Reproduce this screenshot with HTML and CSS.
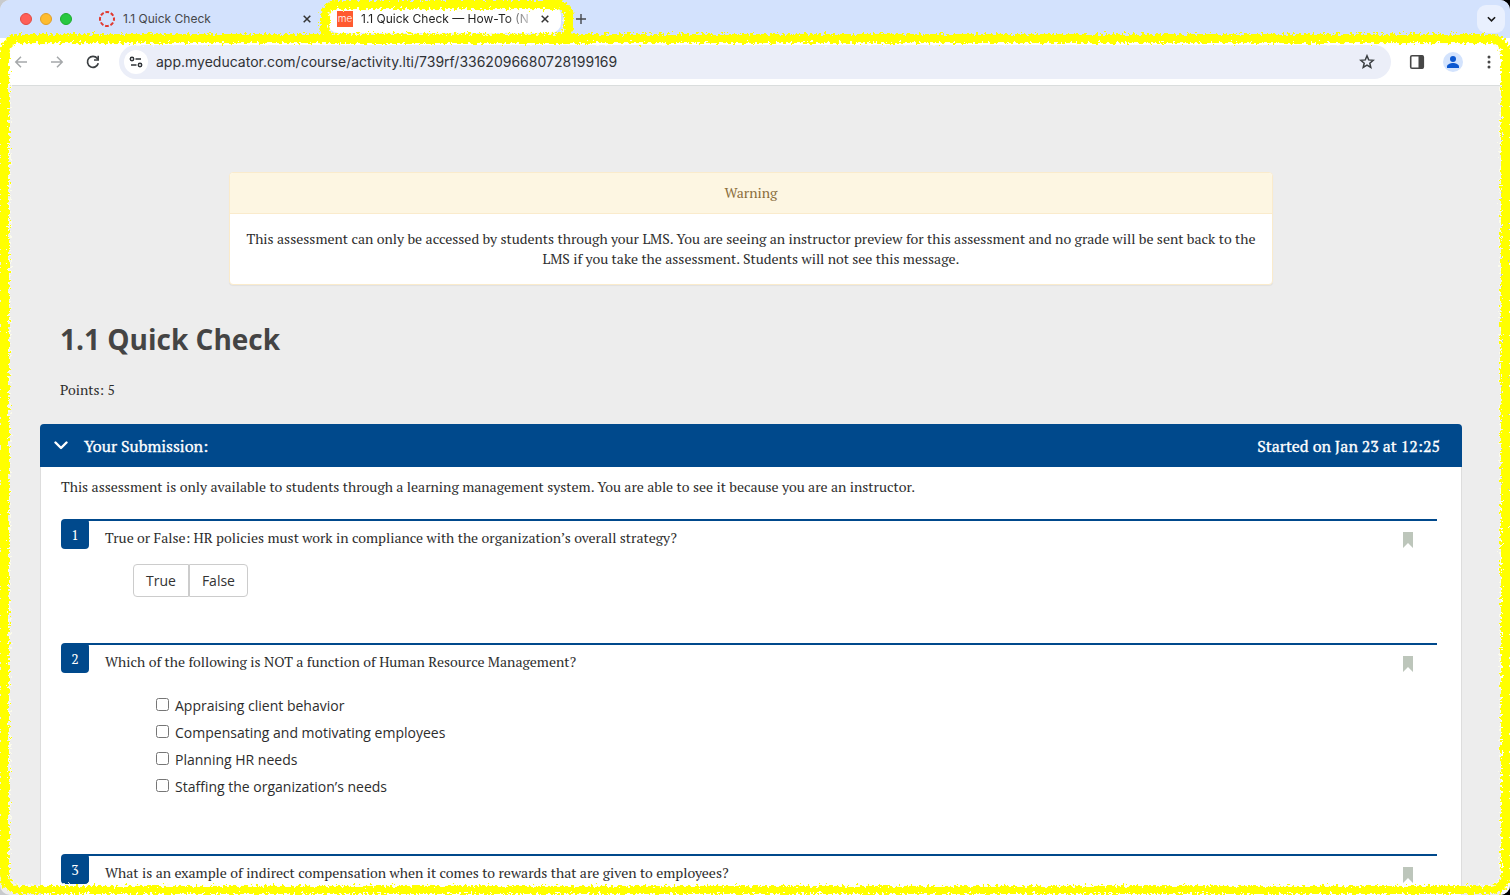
FILE: index.html
```html
<!DOCTYPE html>
<html lang="en">
<head>
    <meta charset="UTF-8">
    <meta name="viewport" content="width=device-width, initial-scale=1.0">
    <title>1.1 Quick Check — How-To</title>
    <link rel="stylesheet" href="styles.css">
</head>
<body>
    <div class="browser">
        <div class="tab-strip">
            <div class="lights">
                <span class="light red"></span>
                <span class="light amber"></span>
                <span class="light green"></span>
            </div>
            <div class="tab">
                <svg class="favicon" viewBox="0 0 16 16" width="16" height="16">
                    <circle cx="8" cy="8" r="7" fill="none" stroke="#e13a30" stroke-width="2" stroke-dasharray="3.7 1.8" stroke-dashoffset="1.85"/>
                </svg>
                <span class="tab-title">1.1 Quick Check</span>
                <button class="tab-close" aria-label="Close tab">
                    <svg viewBox="0 0 8 8" width="8" height="8"><path d="M.7.7l6.6 6.6M7.3.7L.7 7.3"/></svg>
                </button>
            </div>
            <div class="tab current">
                <span class="favicon me">me</span>
                <span class="tab-title fade">1.1 Quick Check — How-To (N</span>
                <button class="tab-close" aria-label="Close tab">
                    <svg viewBox="0 0 8 8" width="8" height="8"><path d="M.7.7l6.6 6.6M7.3.7L.7 7.3"/></svg>
                </button>
            </div>
            <button class="new-tab" aria-label="New tab">
                <svg viewBox="0 0 10 10" width="10" height="10"><path d="M5 0v10M0 5h10" stroke="#45484c" stroke-width="1.4"/></svg>
            </button>
            <button class="tab-search" aria-label="Search tabs">
                <svg viewBox="0 0 10 6" width="9" height="6"><path d="M1 1l4 4 4-4" fill="none" stroke="#1b1b1b" stroke-width="1.8"/></svg>
            </button>
        </div>

        <div class="toolbar">
            <div class="nav">
                <button aria-label="Back">
                    <svg viewBox="0 0 14 12" width="14" height="12"><path d="M13 6H2M7 .8L1.800 6 7 11.200" fill="none" stroke="#a5a8aa" stroke-width="1.500"/></svg>
                </button>
                <button aria-label="Forward">
                    <svg viewBox="0 0 14 12" width="14" height="12"><path d="M1 6h11M7 .8L12.200 6 7 11.200" fill="none" stroke="#a5a8aa" stroke-width="1.500"/></svg>
                </button>
                <button aria-label="Reload">
                    <svg viewBox="0 0 14 14" width="14" height="14"><path d="M12.300 8.300A5.500 5.500 0 1 1 11.300 3.400L12 4.200" fill="none" stroke="#3c4043" stroke-width="1.700"/><path d="M13 .8v5H8V4.200h3.400V.8z" fill="#3c4043"/></svg>
                </button>
            </div>
            <div class="omnibox">
                <button class="site-info" aria-label="Site information">
                    <svg viewBox="0 0 14 12" width="14" height="12" fill="none" stroke="#2f3337" stroke-width="1.500"><circle cx="3" cy="3" r="1.700"/><path d="M6.500 3H12M2 9h5.500"/><circle cx="11" cy="9" r="1.700"/></svg>
                </button>
                <input class="url" type="text" aria-label="Address" value="app.myeducator.com/course/activity.lti/739rf/3362096680728199169">
                <button class="star" aria-label="Bookmark this tab">
                    <svg viewBox="0 0 16 16" width="16" height="16"><path d="M8 1.800l1.700 4.100 4.500.4-3.400 2.900 1 4.300L8 11.200l-3.800 2.300 1-4.300-3.400-2.900 4.500-.4z" fill="none" stroke="#3c4043" stroke-width="1.500"/></svg>
                </button>
            </div>
            <button class="side-panel" aria-label="Side panel">
                <svg viewBox="0 0 16 16" width="16" height="16"><rect x="1.700" y="1.700" width="12.600" height="12.600" rx="1.300" fill="none" stroke="#474747" stroke-width="1.600"/><path d="M9.500 1.500H14v13H9.500z" fill="#474747"/></svg>
            </button>
            <button class="profile" aria-label="Profile">
                <svg viewBox="0 0 20 20" width="20" height="20"><circle cx="10" cy="10" r="10" fill="#d3e3fd"/><circle cx="10" cy="7" r="3" fill="#0b57d0"/><path d="M4 16v-1.500c0-2 3.500-3.500 6-3.500s6 1.500 6 3.500V16z" fill="#0b57d0"/></svg>
            </button>
            <button class="menu" aria-label="Menu">
                <svg viewBox="0 0 4 14" width="4" height="14" fill="#474747"><circle cx="2" cy="2" r="1.500"/><circle cx="2" cy="7" r="1.500"/><circle cx="2" cy="12" r="1.500"/></svg>
            </button>
        </div>

        <div class="viewport">
            <main class="page">
                <section class="warning">
                    <div class="warning-title">Warning</div>
                    <p class="warning-text">This assessment can only be accessed by students through your LMS. You are seeing an instructor preview for this assessment and no grade will be sent back to the LMS if you take the assessment. Students will not see this message.</p>
                </section>

                <h1>1.1 Quick Check</h1>
                <p class="points">Points: 5</p>

                <section class="submission">
                    <header class="submission-header">
                        <svg viewBox="0 0 14 9" width="14" height="9"><path d="M1.500 1.500L7 7l5.500-5.500" fill="none" stroke="#fff" stroke-width="2.400" stroke-linecap="round" stroke-linejoin="round"/></svg>
                        <h2>Your Submission:</h2>
                        <span class="started">Started on Jan 23 at 12:25</span>
                    </header>
                    <div class="submission-body">
                        <p class="intro">This assessment is only available to students through a learning management system. You are able to see it because you are an instructor.</p>

                        <article class="question short">
                            <div class="number">1</div>
                            <div class="question-main">
                                <p class="prompt">True or False: HR policies must work in compliance with the organization’s overall strategy?</p>
                                <div class="true-false">
                                    <button>True</button>
                                    <button>False</button>
                                </div>
                            </div>
                            <svg class="bookmark" viewBox="0 0 10 16" width="10" height="16"><path d="M0 0h10v16l-5-5-5 5z" fill="#bdc6bb"/></svg>
                        </article>

                        <article class="question long">
                            <div class="number">2</div>
                            <div class="question-main">
                                <p class="prompt">Which of the following is NOT a function of Human Resource Management?</p>
                                <div class="choices">
                                    <label><input type="checkbox"> Appraising client behavior</label>
                                    <label><input type="checkbox"> Compensating and motivating employees</label>
                                    <label><input type="checkbox"> Planning HR needs</label>
                                    <label><input type="checkbox"> Staffing the organization’s needs</label>
                                </div>
                            </div>
                            <svg class="bookmark" viewBox="0 0 10 16" width="10" height="16"><path d="M0 0h10v16l-5-5-5 5z" fill="#bdc6bb"/></svg>
                        </article>

                        <article class="question">
                            <div class="number">3</div>
                            <div class="question-main">
                                <p class="prompt">What is an example of indirect compensation when it comes to rewards that are given to employees?</p>
                            </div>
                            <svg class="bookmark" viewBox="0 0 10 16" width="10" height="16"><path d="M0 0h10v16l-5-5-5 5z" fill="#bdc6bb"/></svg>
                        </article>
                    </div>
                </section>
            </main>
            <div class="scrollbar"><div class="thumb"></div></div>
        </div>
    </div>

    <!-- crayon highlight around the page and the current tab -->
    <svg class="defs" width="0" height="0">
        <filter id="crayon" x="-5%" y="-5%" width="110%" height="110%">
            <feTurbulence type="fractalNoise" baseFrequency="0.35" numOctaves="2" seed="4" result="noise"/>
            <feDisplacementMap in="SourceGraphic" in2="noise" scale="9" xChannelSelector="R" yChannelSelector="G"/>
        </filter>
    </svg>
    <div class="marker marker-page"></div>
    <div class="marker marker-tab"></div>
</body>
</html>
```
FILE: styles.css
```css
* { box-sizing: border-box; }
body {
    margin: 0;
    background: linear-gradient(90deg, #c8cacc 50%, #000 50%);
    color: #2d2d2d;
    font-family: "PT Serif", "Liberation Serif", serif;
    font-size: 14px;
    line-height: 20px;
}
button {
    display: flex;
    align-items: center;
    justify-content: center;
    padding: 0;
    border: 0;
    background: none;
    cursor: pointer;
}
p, h1, h2 { margin: 0; }
.browser {
    display: flex;
    flex-direction: column;
    height: 100vh;
    overflow: hidden;
    border-radius: 10px;
    background: #ededed;
}

/* tabs */
.tab-strip {
    display: flex;
    flex: none;
    align-items: center;
    height: 38px;
    padding: 0 5px 0 20px;
    background: #d3e2fd;
    font-family: Inter, sans-serif;
    font-size: 12px;
    color: #45474a;
}
.lights { display: flex; gap: 8px; margin-right: 18px; }
.light { width: 12px; height: 12px; border-radius: 50%; }
.red { background: #ff5f57; border: 1px solid #e24b42; }
.amber { background: #febc2e; border: 1px solid #e0a028; }
.green { background: #28c840; border: 1px solid #1dad2c; }
.tab {
    display: flex;
    align-items: center;
    width: 238px;
    height: 28px;
    padding: 0 17px 0 9px;
    border-radius: 10px;
}
.current { width: 233px; padding-right: 12px; background: #fff; color: #1f1f1f; }
.favicon { flex: none; width: 16px; height: 16px; margin-right: 8px; }
.me {
    background: #ff5a30;
    color: #fff;
    font-size: 10px;
    font-weight: 300;
    line-height: 15px;
    text-align: center;
}
.tab-title { flex: 1; white-space: nowrap; }
.fade {
    -webkit-mask-image: linear-gradient(90deg, #000 80%, transparent 98%);
    mask-image: linear-gradient(90deg, #000 80%, transparent 98%);
}
.tab-close path { stroke: #333; stroke-width: 1.5; }
.new-tab { margin-left: 15px; }
.tab-search {
    width: 28px;
    height: 28px;
    margin-left: auto;
    border-radius: 9px;
    background: #e9f0fe;
}

/* toolbar */
.toolbar {
    display: flex;
    flex: none;
    align-items: center;
    height: 48px;
    padding: 0 19px 0 14px;
    border-bottom: 1px solid #dadddd;
    background: #fff;
}
.nav { display: flex; gap: 22px; margin-right: 19px; }
.omnibox {
    display: flex;
    flex: 1;
    align-items: center;
    height: 34px;
    margin-right: 18px;
    padding: 0 16px 0 5px;
    border-radius: 17px;
    background: #ebeef8;
}
.site-info { width: 24px; height: 24px; border-radius: 50%; background: #fff; }
.url {
    flex: 1;
    margin-left: 8px;
    padding: 0;
    border: 0;
    outline: 0;
    background: none;
    color: #303236;
    font-family: Inter, sans-serif;
    font-size: 14px;
}
.side-panel { margin-right: 18px; }
.profile { margin-right: 24px; }

/* page */
.viewport { display: flex; flex: 1; min-height: 0; }
.page { flex: 1; padding: 86px 39px 0 40px; overflow: hidden; }
.scrollbar { width: 9px; background: #fafafa; }
.thumb { width: 8px; height: 413px; background: #c1c1c1; }
.warning {
    margin: 0 189px;
    border: 1px solid #faebcc;
    border-radius: 4px;
    background: #fff;
    box-shadow: 0 1px 1px rgba(0, 0, 0, 0.05);
    text-align: center;
}
.warning-title {
    padding: 10px;
    border-bottom: 1px solid #faebcc;
    border-radius: 4px 4px 0 0;
    background: #fdf6e2;
    color: #8a6d3b;
}
.warning-text { padding: 15px 14px; }
h1 {
    margin: 34px 20px 0;
    color: #444;
    font-family: "Open Sans", sans-serif;
    font-size: 28px;
    line-height: 40px;
}
.points { margin: 21px 20px 24px; }
.submission-header {
    display: flex;
    align-items: center;
    height: 43px;
    padding: 0 22px 0 14px;
    border-radius: 4px 4px 0 0;
    background: #00498c;
    color: #fff;
    font-size: 16px;
    -webkit-text-stroke: 0.3px #fff;
}
.submission-header h2 { margin-left: 16px; font-size: 16px; font-weight: normal; }
.started { margin-left: auto; }
.submission-body {
    height: 600px;
    padding: 10px 24px 0 20px;
    border: 1px solid #ddd;
    border-top: 0;
    background: #fff;
}
.intro { margin-bottom: 22px; }
.question {
    display: flex;
    align-items: flex-start;
    padding-top: 2px;
    background: linear-gradient(#00498c, #00498c) 20px 0 / 100% 2px no-repeat;
}
.short { height: 124px; }
.long { height: 211px; }
.number {
    width: 28px;
    height: 30px;
    margin-top: -2px;
    border-radius: 4px;
    background: #00498c;
    color: #fff;
    line-height: 32px;
    text-align: center;
}
.question-main { flex: 1; margin-left: 16px; padding-top: 7px; }
.bookmark { margin: 11px 24px 0 0; }
.true-false { display: flex; margin: 16px 0 0 28px; }
.true-false button {
    height: 33px;
    padding: 0 12px;
    border: 1px solid #ccc;
    border-radius: 4px 0 0 4px;
    background: #fff;
    color: #333;
    font-family: "Open Sans", sans-serif;
    font-size: 14px;
}
.true-false button + button { border-radius: 0 4px 4px 0; }
.choices {
    display: flex;
    flex-direction: column;
    gap: 7px;
    margin: 24px 0 0 51px;
    font-family: "Open Sans", sans-serif;
    font-size: 14px;
}
.choices label { display: flex; }
.choices input { width: 13px; height: 13px; margin: 2px 6px 0 0; }

/* crayon */
.defs { position: absolute; }
.marker {
    position: absolute;
    border: 9px solid #ff0;
    box-shadow: inset 0 0 0 1px rgba(255, 255, 235, 0.8);
    filter: url(#crayon);
    pointer-events: none;
}
.marker-page { top: 34px; right: -1px; bottom: 1px; left: -1px; border-width: 9px 10px 8px; border-radius: 20px; }
.marker-tab { top: 0; left: 320px; width: 253px; height: 43px; border-radius: 16px; }
```
